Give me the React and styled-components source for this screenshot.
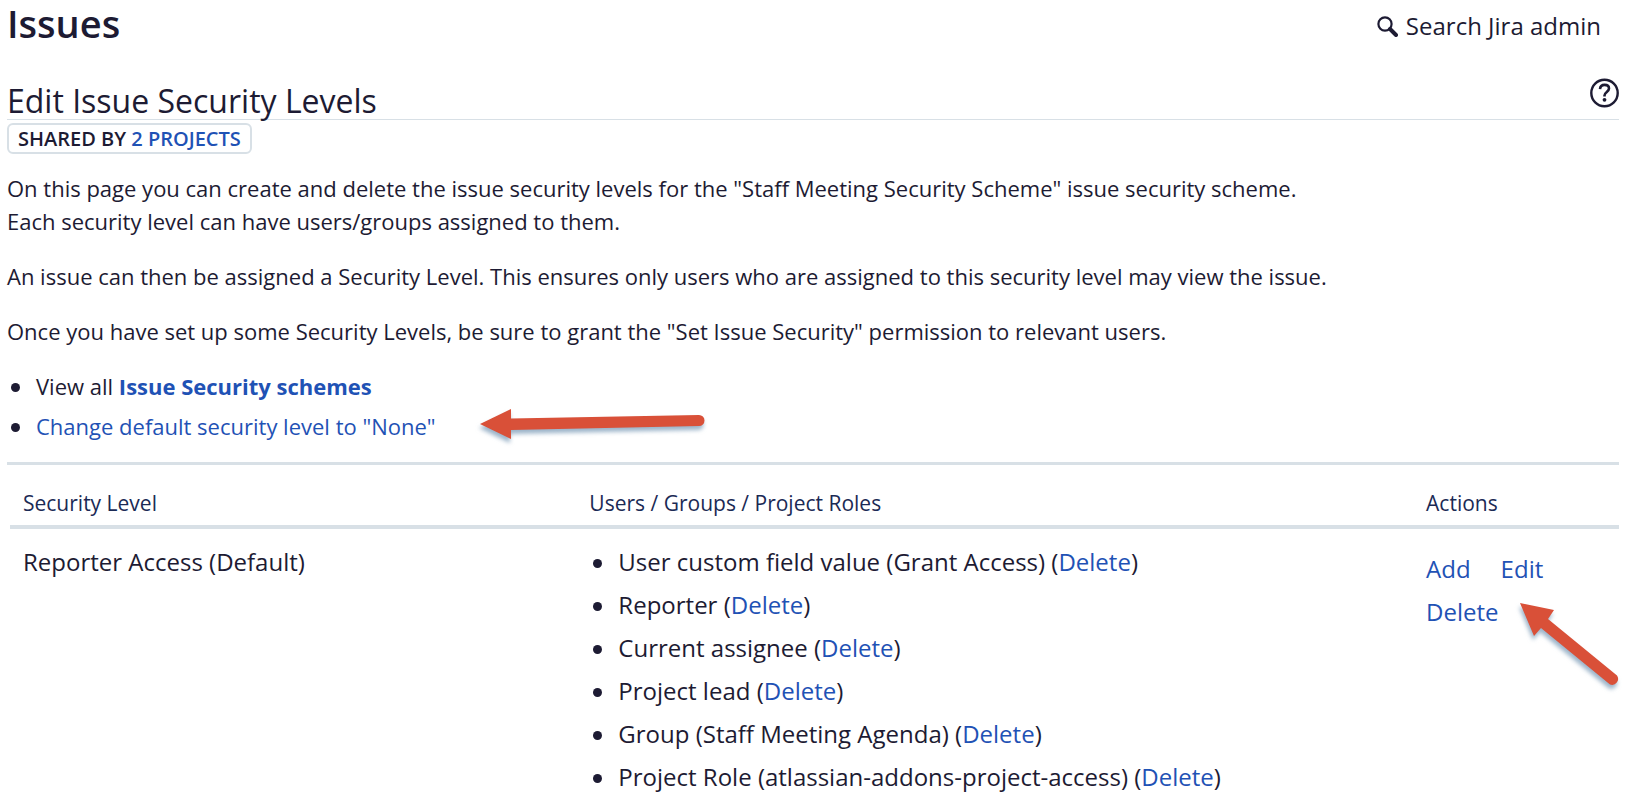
import React from "react";
import styled, { createGlobalStyle } from "styled-components";

const INK = "#1d1b33";
const LINK = "#1f52b5";
const RULE = "#d8e0e6";
const ARROW = "#d95038";

const GlobalStyle = createGlobalStyle`
  *, *::before, *::after { box-sizing: border-box; }
  body {
    margin: 0;
    background: #fff;
    color: ${INK};
    font-family: "Open Sans", "Segoe UI", sans-serif;
    font-size: 22px;
    line-height: 33px;
  }
`;

const Page = styled.main`
  padding: 0 11px 0 7px;
`;

const TopBar = styled.header`
  display: flex;
  justify-content: space-between;
  align-items: flex-start;
  height: 52px;
  padding-right: 18px;
`;

const Title = styled.h1`
  margin: 0;
  font-size: 38px;
  line-height: 46px;
  font-weight: 600;
`;

const SearchButton = styled.button`
  display: flex;
  align-items: center;
  gap: 8px;
  margin-top: 8px;
  padding: 0;
  border: 0;
  background: none;
  color: ${INK};
  font: inherit;
  font-size: 24px;
  line-height: 36px;
  cursor: pointer;
`;

const SectionHead = styled.div`
  display: flex;
  justify-content: space-between;
  align-items: flex-end;
  height: 68px;
  border-bottom: 1px solid ${RULE};
`;

const SectionTitle = styled.h2`
  margin: 0;
  font-size: 32px;
  line-height: 36px;
  font-weight: 400;
`;

const HelpButton = styled.button`
  display: flex;
  margin: 0 0 11px;
  padding: 0;
  border: 0;
  background: none;
  color: ${INK};
  cursor: pointer;
`;

const Link = styled.a`
  color: ${LINK};
  text-decoration: none;
  font-weight: ${(p) => (p.$strong ? 700 : "inherit")};
`;

const SharedBadge = styled.div`
  width: fit-content;
  margin-top: 3px;
  padding: 0 9px;
  border: 2px solid ${RULE};
  border-radius: 6px;
  font-size: 20px;
  line-height: 27px;
  font-weight: 600;
  text-transform: uppercase;
`;

const Intro = styled.section`
  padding-top: 18px;
`;

const Text = styled.p`
  margin: 0 0 22px;
`;

const BulletList = styled.ul`
  margin: ${(p) => (p.$raised ? "-4px 0 0" : "0")};
  padding: 0 0 0 29px;
  list-style: none;
`;

const Bullet = styled.li`
  position: relative;
  line-height: ${(p) => p.$line};

  &::before {
    content: "";
    position: absolute;
    left: -25px;
    top: calc(50% - 3px);
    width: 9px;
    height: 9px;
    border-radius: 50%;
    background: ${INK};
  }
`;

const Callout = styled.svg`
  position: absolute;
  left: ${(p) => p.$left};
  top: ${(p) => p.$top};
  overflow: visible;
  pointer-events: none;
  filter: drop-shadow(-1px 4px 2px rgba(90, 130, 165, 0.6));
`;

const TableWrap = styled.div`
  margin-top: 16px;
  padding-left: 3px;
  border-top: 3px solid ${RULE};
`;

const Table = styled.table`
  width: 100%;
  table-layout: fixed;
  border-collapse: collapse;
`;

const HeadCell = styled.th`
  width: ${(p) => p.$width};
  padding: 22px 13px 5px;
  border-bottom: 4px solid ${RULE};
  text-align: left;
  font-size: 21px;
  font-weight: 400;
  color: #1b2a55;
`;

const Cell = styled.td`
  position: relative;
  padding: ${(p) => (p.$lowered ? "18px" : "11px")} 13px 0;
  vertical-align: top;
  font-size: 24px;
  line-height: 43px;
`;

const ActionLinks = styled.div`
  display: flex;
  flex-wrap: wrap;
  column-gap: 30px;
  width: 150px;
`;

const SearchIcon = () => (
  <svg width="21" height="21" viewBox="0 0 21 21" fill="none" stroke="currentColor" aria-hidden="true">
    <circle cx="8" cy="8" r="6.6" strokeWidth="2.2" />
    <path d="M13 13l6 6" strokeWidth="4" strokeLinecap="round" />
  </svg>
);

const HelpIcon = () => (
  <svg width="29" height="30" viewBox="0 0 29 30" fill="none" stroke="currentColor" aria-hidden="true">
    <circle cx="14.500" cy="15" r="13.200" strokeWidth="2.400" />
    <path d="M10 11.200c.2-2.800 2-4.300 4.600-4.300 2.700 0 4.400 1.500 4.400 3.700 0 3.300-4.500 3.400-4.500 6.900v1" strokeWidth="2.600" />
    <circle cx="14.500" cy="21.800" r="1.900" fill="currentColor" stroke="none" />
  </svg>
);

const roles = [
  "User custom field value (Grant Access)",
  "Reporter",
  "Current assignee",
  "Project lead",
  "Group (Staff Meeting Agenda)",
  "Project Role (atlassian-addons-project-access)",
];

export default function App() {
  return (
    <>
      <GlobalStyle />
      <Page>
        <TopBar>
          <Title>Issues</Title>
          <SearchButton type="button">
            <SearchIcon />
            Search Jira admin
          </SearchButton>
        </TopBar>

        <SectionHead>
          <SectionTitle>Edit Issue Security Levels</SectionTitle>
          <HelpButton type="button" aria-label="Help">
            <HelpIcon />
          </HelpButton>
        </SectionHead>
        <SharedBadge>
          Shared by <Link href="#projects">2 projects</Link>
        </SharedBadge>

        <Intro>
          <Text>
            On this page you can create and delete the issue security levels for the "Staff Meeting Security Scheme"
            issue security scheme.
            <br />
            Each security level can have users/groups assigned to them.
          </Text>
          <Text>
            An issue can then be assigned a Security Level. This ensures only users who are assigned to this security
            level may view the issue.
          </Text>
          <Text>
            Once you have set up some Security Levels, be sure to grant the "Set Issue Security" permission to relevant
            users.
          </Text>
          <BulletList $raised>
            <Bullet $line="40px">
              View all{" "}
              <Link $strong href="#schemes">
                Issue Security schemes
              </Link>
            </Bullet>
            <Bullet $line="40px">
              <Link href="#default">Change default security level to "None"</Link>
              <Callout $left="444px" $top="2px" width="226" height="34" viewBox="0 0 226 34" aria-hidden="true">
                <path d="M0 16L31 1V10.500L219 7A5.500 5.500 0 0 1 219 18L31 22V31Z" fill={ARROW} />
              </Callout>
            </Bullet>
          </BulletList>
        </Intro>

        <TableWrap>
          <Table>
            <thead>
              <tr>
                <HeadCell scope="col" $width="35.2%">Security Level</HeadCell>
                <HeadCell scope="col">Users / Groups / Project Roles</HeadCell>
                <HeadCell scope="col" $width="12.8%">Actions</HeadCell>
              </tr>
            </thead>
            <tbody>
              <tr>
                <Cell>Reporter Access (Default)</Cell>
                <Cell>
                  <BulletList>
                    {roles.map((role) => (
                      <Bullet key={role} $line="43px">
                        {role} (<Link href="#delete-role">Delete</Link>)
                      </Bullet>
                    ))}
                  </BulletList>
                </Cell>
                <Cell $lowered>
                  <ActionLinks>
                    <Link href="#add">Add</Link>
                    <Link href="#edit">Edit</Link>
                    <Link href="#delete">Delete</Link>
                  </ActionLinks>
                  <Callout $left="107px" $top="74px" width="100" height="84" viewBox="0 0 100 84" aria-hidden="true">
                    <path d="M0 0L34 7L28 16L97 72.500A6 6 0 0 1 90 81.500L21 25L14 33Z" fill={ARROW} />
                  </Callout>
                </Cell>
              </tr>
            </tbody>
          </Table>
        </TableWrap>
      </Page>
    </>
  );
}
